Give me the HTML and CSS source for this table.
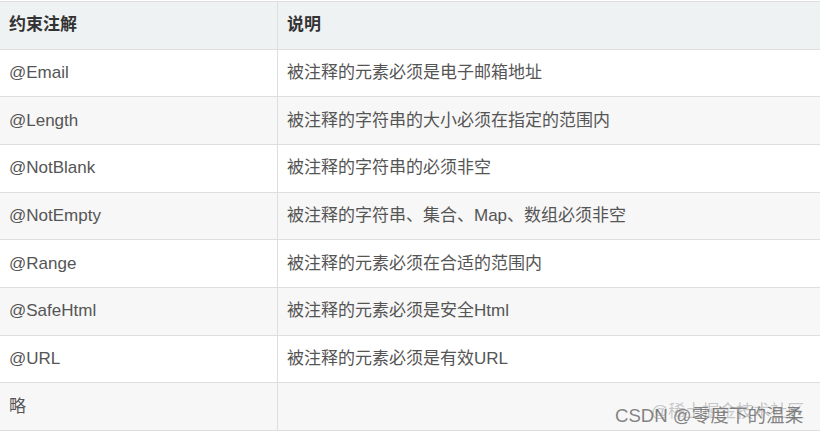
FILE: index.html
```html
<!DOCTYPE html>
<html lang="zh">
<head>
<meta charset="utf-8">
<link rel="stylesheet" href="styles.css">
</head>
<body>
<div class="wrap">
<table class="tbl">
<thead>
<tr><th class="c1">约束注解</th><th>说明</th></tr>
</thead>
<tbody>
<tr><td class="c1">@Email</td><td>被注释的元素必须是电子邮箱地址</td></tr>
<tr class="alt"><td class="c1">@Length</td><td>被注释的字符串的大小必须在指定的范围内</td></tr>
<tr><td class="c1">@NotBlank</td><td>被注释的字符串的必须非空</td></tr>
<tr class="alt"><td class="c1">@NotEmpty</td><td>被注释的字符串、集合、Map、数组必须非空</td></tr>
<tr><td class="c1">@Range</td><td>被注释的元素必须在合适的范围内</td></tr>
<tr class="alt"><td class="c1">@SafeHtml</td><td>被注释的元素必须是安全Html</td></tr>
<tr><td class="c1">@URL</td><td>被注释的元素必须是有效URL</td></tr>
<tr class="alt"><td class="c1">略</td><td></td></tr>
</tbody>
</table>
<div class="wm wm-a">@稀土掘金技术社区</div>
<div class="wm wm-b">CSDN @零度下的温柔</div>
</div>
</body>
</html>
```
FILE: styles.css
```css
html, body {
  margin: 0;
  padding: 0;
  background: #ffffff;
}
.wrap {
  position: relative;
  width: 820px;
  height: 433px;
  padding-top: 1px;
  box-sizing: border-box;
  overflow: hidden;
}
.tbl {
  border-collapse: collapse;
  width: 822px;
  margin-left: -1px;
  font-family: "Liberation Sans", Arial, "Noto Sans CJK SC", sans-serif;
  font-size: 17px;
  color: #555555;
}
.tbl th, .tbl td {
  border: 1px solid #dedede;
  height: 46.67px;
  padding: 0 9px;
  text-align: left;
  vertical-align: middle;
  line-height: 20px;
}
.tbl th {
  background: #eff2f3;
  color: #333333;
  font-weight: bold;
}
.tbl .c1 {
  width: 259px;
}
.tbl tr.alt td {
  background: #f7f7f7;
}
.wm {
  position: absolute;
  font-family: "Liberation Sans", Arial, "Noto Sans CJK SC", sans-serif;
  white-space: nowrap;
}
.wm-a {
  left: 651px;
  top: 397px;
  font-size: 17px;
  color: rgba(120, 120, 120, 0.4);
}
.wm-b {
  left: 615px;
  top: 400px;
  font-size: 18.6px;
  color: rgba(110, 110, 110, 0.85);
}
```
